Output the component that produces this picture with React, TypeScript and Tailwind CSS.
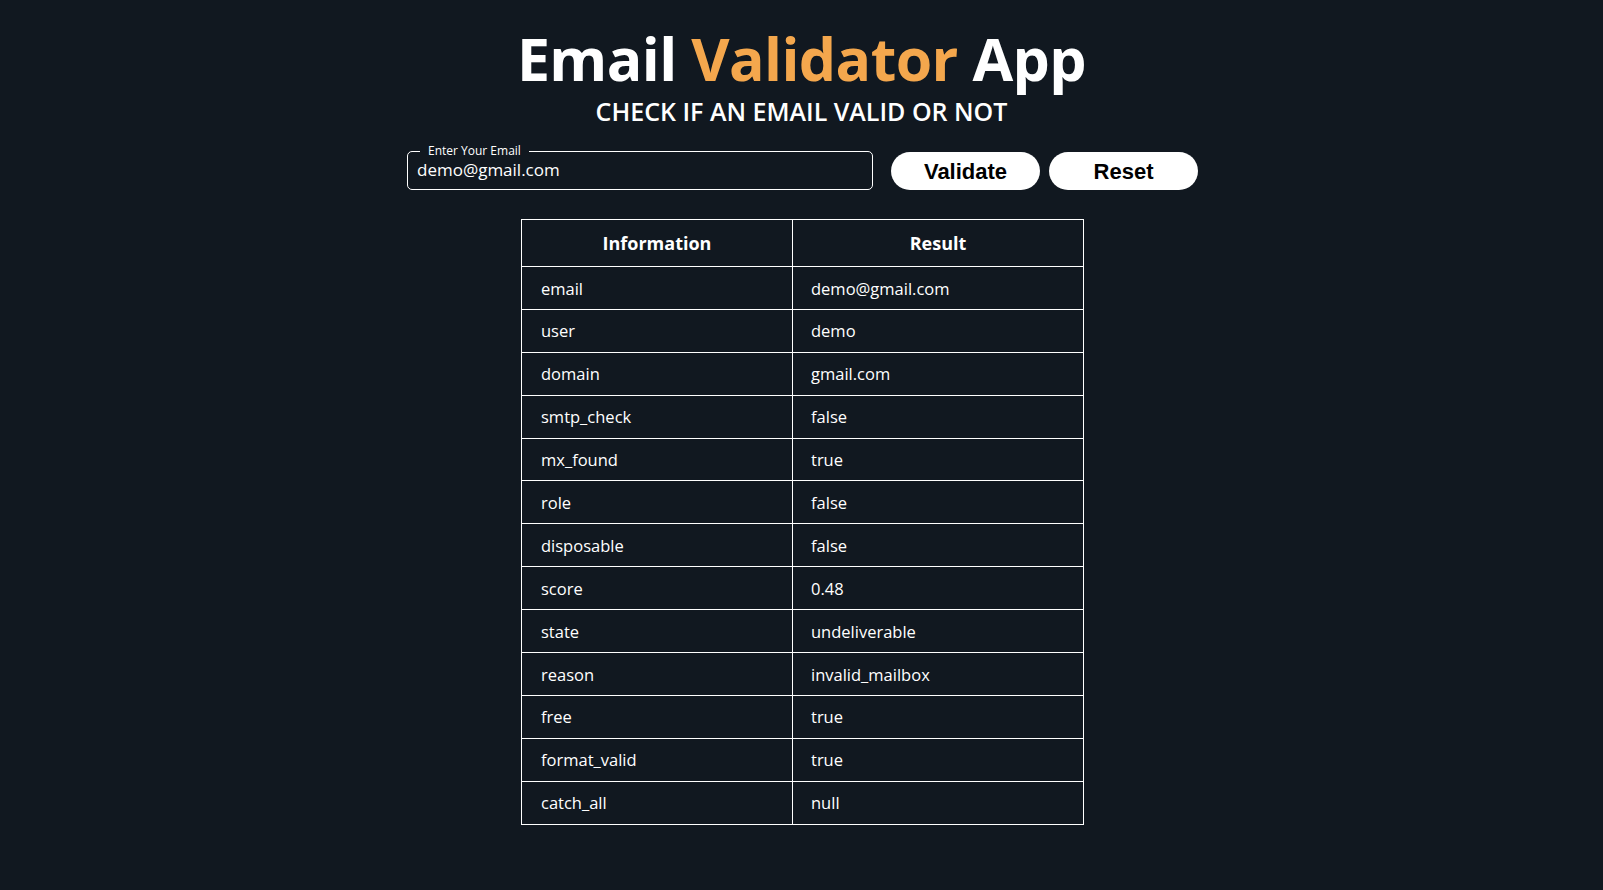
import React from 'react';

type Row = { info: string; result: string };

const rows: Row[] = [
  { info: 'email', result: 'demo@gmail.com' },
  { info: 'user', result: 'demo' },
  { info: 'domain', result: 'gmail.com' },
  { info: 'smtp_check', result: 'false' },
  { info: 'mx_found', result: 'true' },
  { info: 'role', result: 'false' },
  { info: 'disposable', result: 'false' },
  { info: 'score', result: '0.48' },
  { info: 'state', result: 'undeliverable' },
  { info: 'reason', result: 'invalid_mailbox' },
  { info: 'free', result: 'true' },
  { info: 'format_valid', result: 'true' },
  { info: 'catch_all', result: 'null' },
];

const App: React.FC = () => {
  const [email, setEmail] = React.useState('demo@gmail.com');

  return (
    <div className="min-h-screen bg-[#111820] text-white font-['Open_Sans',sans-serif] flex flex-col items-center">
      <h1 className="mt-[28px] text-[59px] leading-[60px] font-bold tracking-[-0.6px]">
        Email <span className="text-[#f4a74d]">Validator</span> App
      </h1>
      <h2 className="mt-[6px] text-[25px] leading-[34px] font-semibold">CHECK IF AN EMAIL VALID OR NOT</h2>

      <div className="mt-[24px] flex items-end gap-[18px] pl-[2px]">
        <fieldset className="w-[466px] h-[46px] border border-white rounded-[5px] px-[9px] pb-[4px] -mt-[8px]">
          <legend className="ml-[3px] px-[8px] text-[12px] leading-[14px] font-medium">Enter Your Email</legend>
          <input
            value={email}
            onChange={(e) => setEmail(e.target.value)}
            className="w-full bg-transparent outline-none text-[17px] leading-[24px] text-white"
          />
        </fieldset>
        <div className="flex gap-[9px]">
          <button className="w-[149px] h-[38px] rounded-full bg-white text-black font-['Liberation_Sans',Arial,sans-serif] font-bold text-[22px]">
            Validate
          </button>
          <button className="w-[149px] h-[38px] rounded-full bg-white text-black font-['Liberation_Sans',Arial,sans-serif] font-bold text-[22px]">
            Reset
          </button>
        </div>
      </div>

      <table className="mt-[29px] ml-[2px] w-[563px] border-collapse border border-white text-[16.5px]">
        <thead>
          <tr className="h-[47px]">
            <th className="w-[271px] border border-white font-bold text-[18px]">Information</th>
            <th className="border border-white font-bold text-[18px]">Result</th>
          </tr>
        </thead>
        <tbody>
          {rows.map((row) => (
            <tr key={row.info} className="h-[42.9px]">
              <td className="border border-white px-[19px] pt-[2px]">{row.info}</td>
              <td className="border border-white px-[18px] pt-[2px]">{row.result}</td>
            </tr>
          ))}
        </tbody>
      </table>
    </div>
  );
};

export default App;
